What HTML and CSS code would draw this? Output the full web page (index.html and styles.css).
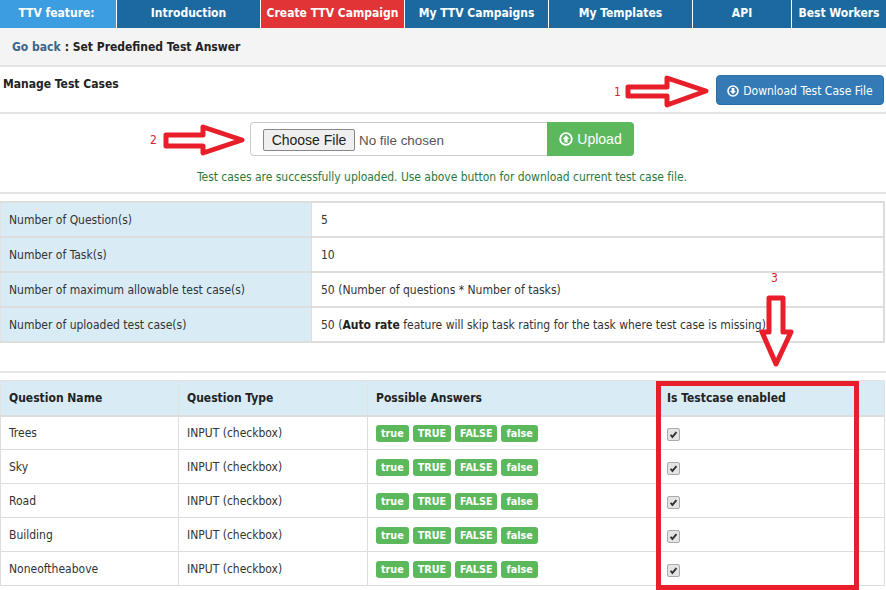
FILE: index.html
```html
<!DOCTYPE html>
<html lang="en">
<head>
<meta charset="utf-8">
<title>Set Predefined Test Answer</title>
<link rel="stylesheet" href="styles.css">
</head>
<body>
<div class="page">
  <nav class="nav">
    <a class="nav-item nav-title">TTV feature:</a>
    <a class="nav-item nav-wide">Introduction</a>
    <a class="nav-item nav-wide nav-active">Create TTV Campaign</a>
    <a class="nav-item nav-wide">My TTV Campaigns</a>
    <a class="nav-item nav-wide">My Templates</a>
    <a class="nav-item nav-api">API</a>
    <a class="nav-item nav-last">Best Workers</a>
  </nav>
  <div class="crumb"><a class="crumb-link">Go back</a> : Set Predefined Test Answer</div>
  <section class="manage">
    <h2 class="manage-title">Manage Test Cases</h2>
    <button class="btn-download" type="button">
      <svg class="btn-icon" viewBox="0 0 12 12"><circle cx="6" cy="6" r="5" fill="none" stroke="currentColor" stroke-width="1.6"/><path d="M4.6 2.9h2.8v3h1.5L6 9.2 3.1 5.9h1.5z" fill="currentColor"/></svg>
      Download Test Case File
    </button>
  </section>
  <section class="upload">
    <form class="upload-group">
      <div class="file-box"><input class="file-input" type="file"></div>
      <button class="btn-upload" type="button">
        <svg class="upload-icon" viewBox="0 0 12 12"><circle cx="6" cy="6" r="5" fill="none" stroke="currentColor" stroke-width="1.6"/><path d="M4.6 9.1h2.8v-3h1.5L6 2.8 3.1 6.1h1.5z" fill="currentColor"/></svg>
        Upload
      </button>
    </form>
    <p class="upload-msg">Test cases are successfully uploaded. Use above button for download current test case file.</p>
  </section>
  <table class="info">
    <tr><th>Number of Question(s)</th><td>5</td></tr>
    <tr><th>Number of Task(s)</th><td>10</td></tr>
    <tr><th>Number of maximum allowable test case(s)</th><td>50 (Number of questions * Number of tasks)</td></tr>
    <tr><th>Number of uploaded test case(s)</th><td>50 (<b>Auto rate</b> feature will skip task rating for the task where test case is missing)</td></tr>
  </table>
  <div class="rule"></div>
  <table class="cases">
    <thead>
      <tr><th class="c-name">Question Name</th><th class="c-type">Question Type</th><th class="c-ans">Possible Answers</th><th class="c-on">Is Testcase enabled</th></tr>
    </thead>
    <tbody>
      <tr><td>Trees</td><td>INPUT (checkbox)</td><td><span class="tag">true</span><span class="tag">TRUE</span><span class="tag">FALSE</span><span class="tag">false</span></td><td class="c-on"><span class="check"><svg viewBox="0 0 13 13"><path d="M3 6.8l2.2 2.6L10 3.6" fill="none" stroke="#333" stroke-width="2.2"/></svg></span></td></tr>
      <tr><td>Sky</td><td>INPUT (checkbox)</td><td><span class="tag">true</span><span class="tag">TRUE</span><span class="tag">FALSE</span><span class="tag">false</span></td><td class="c-on"><span class="check"><svg viewBox="0 0 13 13"><path d="M3 6.8l2.2 2.6L10 3.6" fill="none" stroke="#333" stroke-width="2.2"/></svg></span></td></tr>
      <tr><td>Road</td><td>INPUT (checkbox)</td><td><span class="tag">true</span><span class="tag">TRUE</span><span class="tag">FALSE</span><span class="tag">false</span></td><td class="c-on"><span class="check"><svg viewBox="0 0 13 13"><path d="M3 6.8l2.2 2.6L10 3.6" fill="none" stroke="#333" stroke-width="2.2"/></svg></span></td></tr>
      <tr><td>Building</td><td>INPUT (checkbox)</td><td><span class="tag">true</span><span class="tag">TRUE</span><span class="tag">FALSE</span><span class="tag">false</span></td><td class="c-on"><span class="check"><svg viewBox="0 0 13 13"><path d="M3 6.8l2.2 2.6L10 3.6" fill="none" stroke="#333" stroke-width="2.2"/></svg></span></td></tr>
      <tr><td>Noneoftheabove</td><td>INPUT (checkbox)</td><td><span class="tag">true</span><span class="tag">TRUE</span><span class="tag">FALSE</span><span class="tag">false</span></td><td class="c-on"><span class="check"><svg viewBox="0 0 13 13"><path d="M3 6.8l2.2 2.6L10 3.6" fill="none" stroke="#333" stroke-width="2.2"/></svg></span></td></tr>
    </tbody>
  </table>

  <svg class="marks" viewBox="0 0 886 590" aria-hidden="true">
    <g fill="#fff" stroke="#e81f2b" stroke-width="5" stroke-linejoin="round">
      <path d="M628 87H667V78L706 91L667 105V96H628Z"/>
      <path d="M166 135H203V127L242 140L203 153V146H166Z"/>
      <path d="M769 298H783V332H791L776 364L762 332H769Z"/>
    </g>
    <rect x="658.500" y="383.500" width="198" height="204" fill="none" stroke="#e81f2b" stroke-width="5"/>
  </svg>
  <span class="mark-num num-1">1</span>
  <span class="mark-num num-2">2</span>
  <span class="mark-num num-3">3</span>
</div>
</body>
</html>
```
FILE: styles.css
```css
* { box-sizing: border-box; }
html, body { margin: 0; padding: 0; background: #fff; }
body {
  font-family: "DejaVu Sans", Verdana, sans-serif;
  font-stretch: condensed;
  font-size: 12px;
  color: #333;
}
.page { position: relative; width: 886px; height: 590px; overflow: hidden; }

.nav { display: flex; height: 28px; }
.nav-item {
  display: flex; align-items: center; justify-content: center;
  height: 28px; padding-bottom: 2px; background: #1c699f; color: #fff;
  font-weight: bold;
  border-right: 1px solid #fff;
  white-space: nowrap;
}
.nav-title { width: 117px; padding-right: 3px; background: #3c9ee0; }
.nav-wide { width: 144px; }
.nav-active { background: #e03436; }
.nav-api { width: 99px; }
.nav-last { width: 94px; border-right: 0; }

.crumb {
  height: 39px; padding: 1px 12px 0; background: #f4f4f4;
  border-bottom: 2px solid #e4e4e4;
  display: flex; align-items: center; gap: 4px;
  font-weight: bold; color: #222;
}
.crumb-link { color: #39668f; }

.manage {
  height: 47px; display: flex; justify-content: space-between; align-items: flex-start;
  padding: 8px 2px 0 3px;
  border-bottom: 2px solid #e4e4e4;
}
.manage-title { margin: 2px 0 0; font-size: 12px; font-weight: bold; color: #222; }
.btn-download {
  width: 168px; height: 30px; display: flex; align-items: center; justify-content: center; gap: 4px;
  background: #337ab7; color: #fff; border: 1px solid #2e6da4; border-radius: 4px;
  font-family: "DejaVu Sans", Verdana, sans-serif; font-stretch: condensed; font-size: 12px; padding: 1px 0 0;
}
.btn-icon { width: 12px; height: 12px; }

.upload { height: 80px; padding-top: 8px; border-bottom: 2px solid #e4e4e4; }
.upload-group { display: flex; width: 384px; height: 34px; margin-left: 250px; }
.file-box {
  width: 297px; border: 1px solid #ccc; border-right: 0; border-radius: 4px 0 0 4px;
  padding: 6px 12px; overflow: hidden;
}
.file-input { font: 13.400px "Liberation Sans", Arial, sans-serif; color: #555; width: 270px; display: block; }
.file-input::file-selector-button {
  font: 14px "Liberation Sans", Arial, sans-serif; color: #222; height: 22px; width: 92px;
  border: 1px solid #888; border-radius: 2px; background: #efefef; margin-right: 4px; padding: 0;
}
.btn-upload {
  flex: 1; display: flex; align-items: center; justify-content: center; gap: 4px;
  background: #5cb85c; color: #fff; border: 0; border-radius: 0 4px 4px 0;
  font: 14px "Liberation Sans", Arial, sans-serif; padding: 0;
}
.upload-icon { width: 14px; height: 14px; }
.upload-msg { margin: 14px 0 0; padding-left: 197px; color: #2b7a3d; line-height: 14px; white-space: nowrap; letter-spacing: -0.03px; }

table { border-collapse: collapse; width: 885px; table-layout: fixed; }
.info { margin-top: 7px; border: 2px solid #ddd; border-left: 1px solid #e2e2e2; }
.info th, .info td {
  height: 35px; padding: 0 8px; text-align: left; font-weight: normal;
  border-top: 2px solid #ddd; border-bottom: 2px solid #ddd; white-space: nowrap;
}
.info th { width: 311px; background: #d9ecf6; border-right: 1px solid #ddd; }
.info td { padding-left: 9px; }
.info b { color: #222; }

.rule { height: 2px; margin-top: 28px; background: #e6e6e6; }

.cases { margin-top: 7px; }
.cases th {
  height: 35px; padding: 0 8px; text-align: left; font-weight: bold; color: #222;
  background: #d9ecf6; border: 1px solid #e2e2e2; border-bottom: 2px solid #ddd;
}
.cases td { height: 34px; padding: 0 8px; border: 1px solid #ddd; white-space: nowrap; }
.cases .c-on { padding-left: 9px; }
.c-name { width: 178px; }
.c-type { width: 189px; }
.c-ans { width: 290px; }
.tag {
  display: inline-block; height: 17px; line-height: 17px; margin: 1px 4px 0 0; padding: 0 5px;
  background: #5cb85c; color: #fff; font-weight: bold; font-size: 10.700px; border-radius: 3px;
  vertical-align: middle;
}
.check {
  display: block; width: 13px; height: 13px; margin-top: 3px;
  border: 1px solid #aaa; border-radius: 2px; background: #e4e4e4;
}
.check svg { display: block; width: 11px; height: 11px; }

.marks { position: absolute; left: 0; top: 0; width: 886px; height: 590px; pointer-events: none; }
.mark-num { position: absolute; color: #d8242c; font-size: 12px; line-height: 14px; }
.num-1 { left: 614px; top: 85px; }
.num-2 { left: 150px; top: 133px; }
.num-3 { left: 771px; top: 271px; }
```
